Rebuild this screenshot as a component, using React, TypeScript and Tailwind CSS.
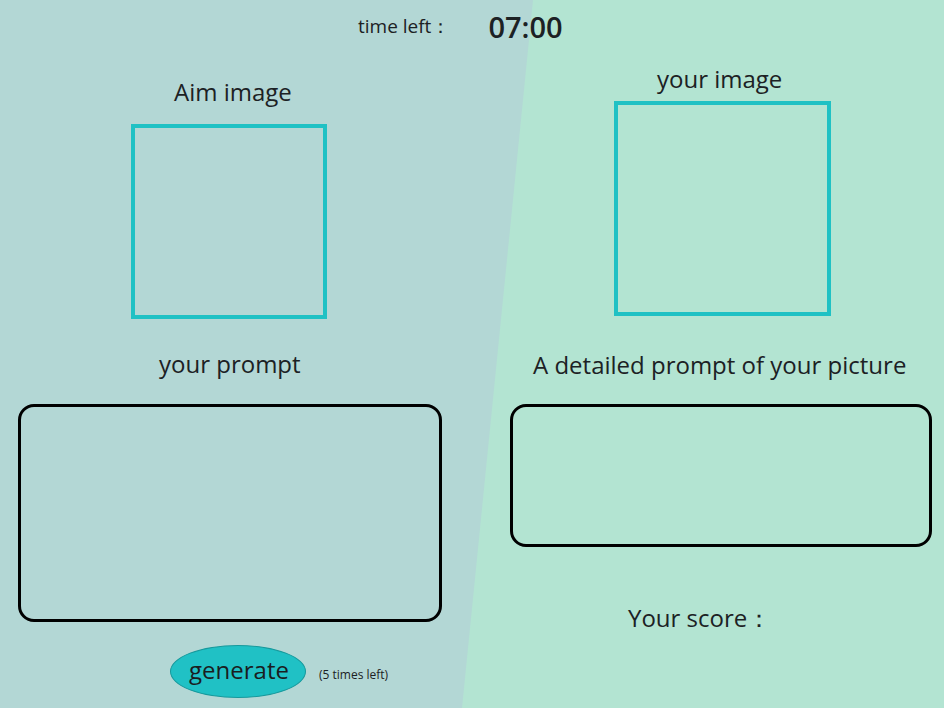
export default function App() {
  return (
    <div className="relative w-[944px] h-[708px] overflow-hidden bg-[#b3e4d2] font-['Open_Sans',sans-serif] text-[#1c2124]">
      {/* split background, left side */}
      <div className="absolute inset-0 bg-[#b3d7d5] [clip-path:polygon(0_0,533px_0,462px_100%,0_100%)]" />

      <div className="relative flex flex-col">
        <header className="h-[52px] flex items-center">
          <span className="ml-[358px] text-[19px] font-medium leading-none">time left：</span>
          <span className="ml-[38px] text-[29px] font-semibold leading-none">07:00</span>
        </header>

        <div className="flex">
          <div className="w-[460px] flex flex-col">
            <div className="mt-[24px] h-[32px] leading-[32px] text-[24px] font-medium pl-[174px]">Aim image</div>
            <div className="mt-[16px] ml-[131px] w-[196px] h-[195px] border-4 border-[#1fc1c4]" />
            <div className="mt-[29px] h-[32px] leading-[32px] text-[24px] font-medium pl-[159px]">your prompt</div>
            <div className="mt-[24px] ml-[18px] w-[424px] h-[218px] border-[3px] border-black rounded-[16px]" />
            <div className="mt-[23px] flex items-center">
              <button className="ml-[170px] w-[136px] h-[53px] rounded-[50%] bg-[#20c1c5] border border-[#17999c] text-[24px] font-medium leading-none pb-[4px] pl-[2px] text-[#1a1d1f]">
                generate
              </button>
              <span className="ml-[13px] text-[12px] font-medium pt-[6px]">(5 times left)</span>
            </div>
          </div>

          <div className="w-[484px] flex flex-col">
            <div className="mt-[11px] h-[32px] leading-[32px] text-[24px] font-medium pl-[197px]">your image</div>
            <div className="mt-[6px] ml-[154px] w-[217px] h-[215px] border-4 border-[#1fc1c4]" />
            <div className="mt-[33px] h-[32px] leading-[32px] text-[24px] font-medium pl-[73px]">A detailed prompt of your picture</div>
            <div className="mt-[23px] ml-[50px] w-[422px] h-[143px] border-[3px] border-black rounded-[16px]" />
            <div className="mt-[55px] h-[32px] leading-[32px] text-[24px] font-medium pl-[168px]">Your score：</div>
          </div>
        </div>
      </div>
    </div>
  );
}
